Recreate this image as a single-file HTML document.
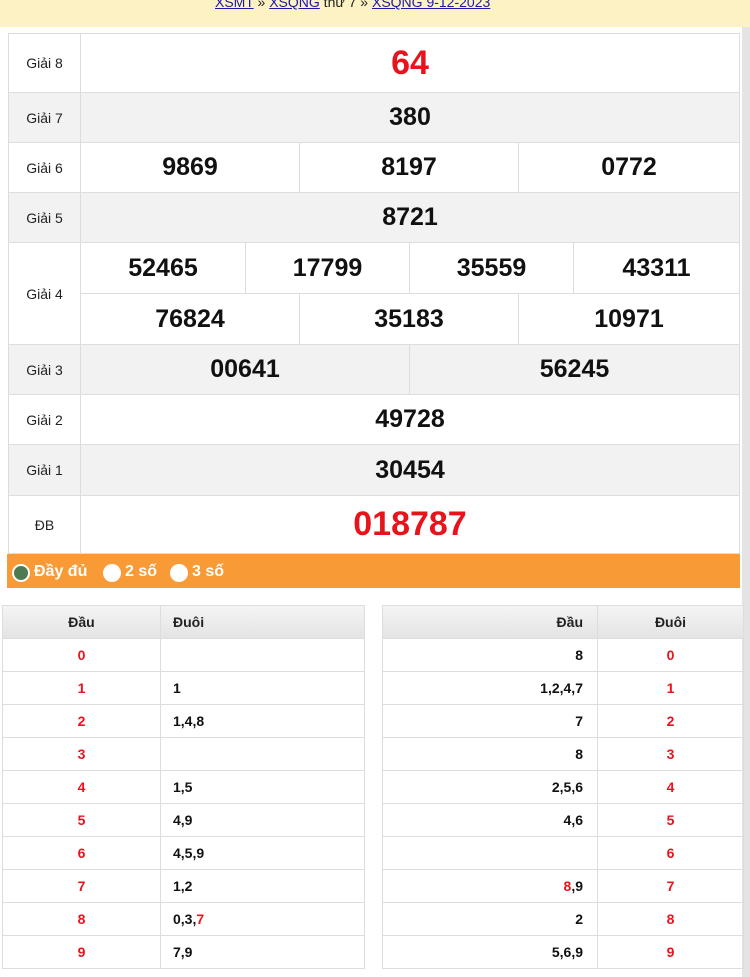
<!DOCTYPE html>
<html><head><meta charset="utf-8"><style>
*{margin:0;padding:0;box-sizing:border-box}
body{width:750px;height:977px;background:#fff;font-family:"Liberation Sans",Arial,sans-serif;position:relative;overflow:hidden}
.a{position:absolute}
.c{position:absolute;border:1px solid #ddd;display:flex;align-items:center;justify-content:center}
.lab{font-size:14px;color:#222}
.n{font-size:25px;font-weight:bold;color:#111}
.r{color:#e8141c;font-size:34px;font-weight:bold}
.g{background:#f2f2f2}
.t{position:absolute;border:1px solid #ddd;font-size:14px;font-weight:bold;display:flex;align-items:center}
.h{background:linear-gradient(#f4f4f4,#e4e4e4);justify-content:center;color:#222}
.red{color:#e8141c}
</style></head><body>
<div class="a" style="left:0;top:0;width:750px;height:27px;background:#fcf2c4"></div>
<div class="a" style="left:215px;top:-6px;font-size:14px;color:#222;white-space:nowrap"><u style="color:#1a1aa6">XSMT</u> » <u style="color:#1a1aa6">XSQNG</u> thứ 7 » <u style="color:#1a1aa6">XSQNG 9-12-2023</u></div>
<div class="a" style="left:742px;top:27px;width:8px;height:950px;background:#e4e4e4"></div>

<div class="c lab" style="left:8px;top:33px;width:73px;height:60px">Giải 8</div>
<div class="c r" style="left:80px;top:33px;width:660px;height:60px">64</div>
<div class="c lab g" style="left:8px;top:92px;width:73px;height:51px">Giải 7</div>
<div class="c n g" style="left:80px;top:92px;width:660px;height:51px">380</div>
<div class="c lab" style="left:8px;top:142px;width:73px;height:51px">Giải 6</div>
<div class="c n" style="left:80px;top:142px;width:220px;height:51px">9869</div>
<div class="c n" style="left:299px;top:142px;width:220px;height:51px">8197</div>
<div class="c n" style="left:518px;top:142px;width:222px;height:51px">0772</div>
<div class="c lab g" style="left:8px;top:192px;width:73px;height:51px">Giải 5</div>
<div class="c n g" style="left:80px;top:192px;width:660px;height:51px">8721</div>
<div class="c lab" style="left:8px;top:242px;width:73px;height:103px">Giải 4</div>
<div class="c n" style="left:80px;top:242px;width:166px;height:52px">52465</div>
<div class="c n" style="left:245px;top:242px;width:165px;height:52px">17799</div>
<div class="c n" style="left:409px;top:242px;width:165px;height:52px">35559</div>
<div class="c n" style="left:573px;top:242px;width:167px;height:52px">43311</div>
<div class="c n" style="left:80px;top:293px;width:220px;height:52px">76824</div>
<div class="c n" style="left:299px;top:293px;width:220px;height:52px">35183</div>
<div class="c n" style="left:518px;top:293px;width:222px;height:52px">10971</div>
<div class="c lab g" style="left:8px;top:344px;width:73px;height:51px">Giải 3</div>
<div class="c n g" style="left:80px;top:344px;width:330px;height:51px">00641</div>
<div class="c n g" style="left:409px;top:344px;width:331px;height:51px">56245</div>
<div class="c lab" style="left:8px;top:394px;width:73px;height:51px">Giải 2</div>
<div class="c n" style="left:80px;top:394px;width:660px;height:51px">49728</div>
<div class="c lab g" style="left:8px;top:444px;width:73px;height:52px">Giải 1</div>
<div class="c n g" style="left:80px;top:444px;width:660px;height:52px">30454</div>
<div class="c lab" style="left:8px;top:495px;width:73px;height:59px">ĐB</div>
<div class="c r" style="left:80px;top:495px;width:660px;height:59px">018787</div>

<div class="a" style="left:7px;top:554px;width:733px;height:34px;background:#f89a35"></div>
<div class="a" style="left:12px;top:564px;width:18px;height:18px;border-radius:50%;background:#4e7a52;border:2px solid #fff"></div>
<div class="a" style="left:103px;top:564px;width:18px;height:18px;border-radius:50%;background:#fff"></div>
<div class="a" style="left:170px;top:564px;width:18px;height:18px;border-radius:50%;background:#fff"></div>
<div class="a" style="left:34px;top:563px;font-size:16px;font-weight:bold;color:#fff">Đầy đủ</div>
<div class="a" style="left:125px;top:563px;font-size:16px;font-weight:bold;color:#fff">2 số</div>
<div class="a" style="left:192px;top:563px;font-size:16px;font-weight:bold;color:#fff">3 số</div>

<div class="t h" style="left:2px;top:605px;width:159px;height:34px">Đầu</div>
<div class="t h" style="left:160px;top:605px;width:205px;height:34px;justify-content:flex-start;padding-left:12px">Đuôi</div>
<div class="t h" style="left:382px;top:605px;width:216px;height:34px;justify-content:flex-end;padding-right:14px">Đầu</div>
<div class="t h" style="left:597px;top:605px;width:147px;height:34px">Đuôi</div>

<div id="rows"></div>
<script>
var L=["","1","1,4,8","","1,5","4,9","4,5,9","1,2","0,3,<span class=red>7</span>","7,9"];
var R=["8","1,2,4,7","7","8","2,5,6","4,6","","<span class=red>8</span>,9","2","5,6,9"];
var h="";
for(var i=0;i<10;i++){var y=638+i*33;
h+='<div class="t red" style="left:2px;top:'+y+'px;width:159px;height:34px;justify-content:center">'+i+'</div>';
h+='<div class="t" style="left:160px;top:'+y+'px;width:205px;height:34px;padding-left:12px;color:#111">'+L[i]+'</div>';
h+='<div class="t" style="left:382px;top:'+y+'px;width:216px;height:34px;justify-content:flex-end;padding-right:14px;color:#111">'+R[i]+'</div>';
h+='<div class="t red" style="left:597px;top:'+y+'px;width:147px;height:34px;justify-content:center">'+i+'</div>';}
document.getElementById("rows").innerHTML=h;
</script>
</body></html>
